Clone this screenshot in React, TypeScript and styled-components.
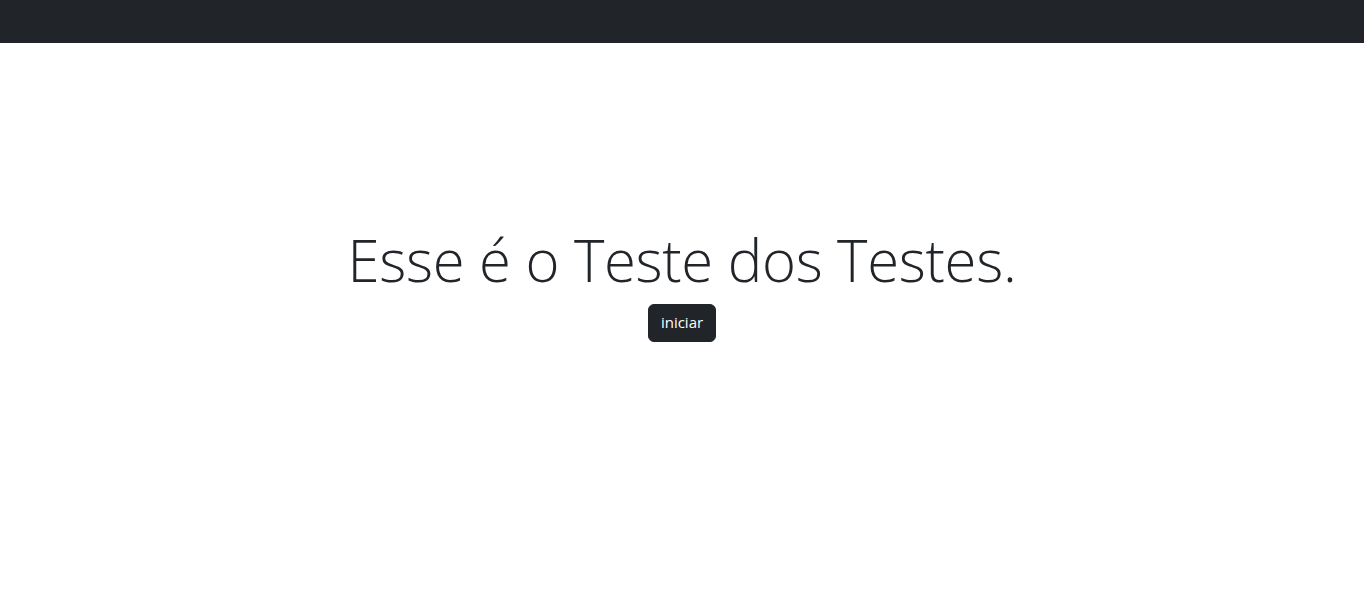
import React from 'react'
import styled, { createGlobalStyle } from 'styled-components'

const GlobalStyle = createGlobalStyle`
  body {
    margin: 0;
    font-family: "Open Sans", "Liberation Sans", sans-serif;
    color: #212529;
    background: #fff;
  }
`

const Navbar = styled.nav`
  height: 43px;
  background-color: #212529;
`

const Hero = styled.main`
  display: flex;
  flex-direction: column;
  align-items: center;
  padding-top: 182px;
`

const Title = styled.h1`
  margin: 0 0 9px;
  font-size: 58px;
  font-weight: 300;
  line-height: 1.2;
  letter-spacing: -0.3px;
`

const StartButton = styled.button`
  height: 38px;
  padding: 6px 12px;
  border: 1px solid #212529;
  border-radius: 6px;
  background: #212529;
  color: #fff;
  font-family: "Open Sans", "Liberation Sans", sans-serif;
  font-size: 15px;
  line-height: 1.5;
  cursor: pointer;
`

export default function App() {
  return (
    <>
      <GlobalStyle />
      <Navbar />
      <Hero>
        <Title>Esse é o Teste dos Testes.</Title>
        <StartButton>iniciar</StartButton>
      </Hero>
    </>
  )
}
